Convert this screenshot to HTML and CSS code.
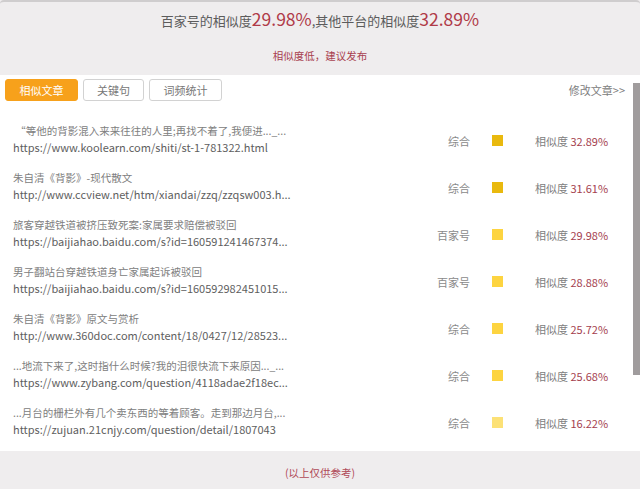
FILE: index.html
```html
<!DOCTYPE html>
<html lang="zh-CN">
<head>
    <meta charset="UTF-8">
    <meta name="viewport" content="width=device-width, initial-scale=1.0">
    <title>相似度检测</title>
    <link rel="stylesheet" href="styles.css">
</head>
<body>
    <div class="report">
        <div class="summary">
            <h1>百家号的相似度<span class="pct">29.98%</span>,其他平台的相似度<span class="pct">32.89%</span></h1>
            <p class="advice">相似度低，建议发布</p>
        </div>

        <div class="panel">
            <div class="toolbar">
                <div class="tabs">
                    <button class="tab active">相似文章</button>
                    <button class="tab">关键句</button>
                    <button class="tab">词频统计</button>
                </div>
                <a class="edit-link" href="#">修改文章&gt;&gt;</a>
            </div>

            <ul class="results">
                <li class="row">
                    <div class="info">
                        <p class="title">&nbsp;“等他的背影混入来来往往的人里;再找不着了,我便进..._...</p>
                        <p class="url">https://www.koolearn.com/shiti/st-1-781322.html</p>
                    </div>
                    <span class="cat">综合</span>
                    <span class="mark level-high"></span>
                    <span class="sim">相似度 <em>32.89%</em></span>
                </li>
                <li class="row">
                    <div class="info">
                        <p class="title">朱自清《背影》-现代散文</p>
                        <p class="url">http://www.ccview.net/htm/xiandai/zzq/zzqsw003.h...</p>
                    </div>
                    <span class="cat">综合</span>
                    <span class="mark level-high"></span>
                    <span class="sim">相似度 <em>31.61%</em></span>
                </li>
                <li class="row">
                    <div class="info">
                        <p class="title">旅客穿越铁道被挤压致死案:家属要求赔偿被驳回</p>
                        <p class="url">https://baijiahao.baidu.com/s?id=160591241467374...</p>
                    </div>
                    <span class="cat">百家号</span>
                    <span class="mark level-mid"></span>
                    <span class="sim">相似度 <em>29.98%</em></span>
                </li>
                <li class="row">
                    <div class="info">
                        <p class="title">男子翻站台穿越铁道身亡家属起诉被驳回</p>
                        <p class="url">https://baijiahao.baidu.com/s?id=160592982451015...</p>
                    </div>
                    <span class="cat">百家号</span>
                    <span class="mark level-mid"></span>
                    <span class="sim">相似度 <em>28.88%</em></span>
                </li>
                <li class="row">
                    <div class="info">
                        <p class="title">朱自清《背影》原文与赏析</p>
                        <p class="url">http://www.360doc.com/content/18/0427/12/28523...</p>
                    </div>
                    <span class="cat">综合</span>
                    <span class="mark level-mid"></span>
                    <span class="sim">相似度 <em>25.72%</em></span>
                </li>
                <li class="row">
                    <div class="info">
                        <p class="title">...地流下来了,这时指什么时候?我的泪很快流下来原因..._...</p>
                        <p class="url">https://www.zybang.com/question/4118adae2f18ec...</p>
                    </div>
                    <span class="cat">综合</span>
                    <span class="mark level-mid"></span>
                    <span class="sim">相似度 <em>25.68%</em></span>
                </li>
                <li class="row">
                    <div class="info">
                        <p class="title">...月台的栅栏外有几个卖东西的等着顾客。走到那边月台,...</p>
                        <p class="url">https://zujuan.21cnjy.com/question/detail/1807043</p>
                    </div>
                    <span class="cat">综合</span>
                    <span class="mark level-low"></span>
                    <span class="sim">相似度 <em>16.22%</em></span>
                </li>
            </ul>
            <div class="scrollbar"></div>
        </div>

        <p class="footnote">(以上仅供参考)</p>
    </div>
</body>
</html>
```

FILE: styles.css
```css
body {
    margin: 0;
    font-family: "Noto Sans CJK SC", "Noto Sans", sans-serif;
    background-color: #efedee;
    color: #666;
}

.report {
    height: 489px;
    border-top: 2px solid #cfcdce;
    border-radius: 4px 4px 0 0;
    box-sizing: border-box;
}

.summary {
    text-align: center;
    padding-top: 5px;
    height: 73px;
    box-sizing: border-box;
}

h1 {
    margin: 0;
    font-size: 13px;
    font-weight: normal;
    line-height: 24px;
    color: #5c5c5c;
}

h1 .pct {
    font-size: 17.5px;
    color: #b03a48;
}

.advice {
    margin: 15px 0 0;
    font-size: 10.5px;
    line-height: 16px;
    color: #a8404f;
}

.panel {
    position: relative;
    background-color: #ffffff;
    padding: 4px 0 7px;
}

.toolbar {
    display: flex;
    justify-content: space-between;
    padding: 0 15px 0 5px;
}

.tabs {
    display: flex;
    gap: 5px;
}

.tab {
    height: 22px;
    padding: 0;
    font-family: inherit;
    font-size: 11px;
    color: #777;
    background-color: #ffffff;
    border: 1px solid #d2d2d2;
    border-radius: 3px;
    white-space: nowrap;
}

.tab:nth-child(1) {
    width: 73px;
}

.tab:nth-child(2) {
    width: 61px;
}

.tab:nth-child(3) {
    width: 73px;
}

.tab.active {
    background-color: #f7a11b;
    border-color: #f7a11b;
    color: #ffffff;
}

.edit-link {
    font-size: 11px;
    line-height: 16px;
    padding-top: 3px;
    color: #808080;
    text-decoration: none;
}

.results {
    list-style: none;
    margin: 14px 0 0;
    padding: 0;
}

.row {
    display: flex;
    align-items: center;
    height: 47px;
    padding: 7px 34px 6px 13px;
    box-sizing: border-box;
    font-size: 11px;
}

.info {
    flex: 1;
    min-width: 0;
}

.info p {
    margin: 0;
    line-height: 17px;
    white-space: nowrap;
}

.title {
    font-size: 10.5px;
    color: #808080;
}

.url {
    color: #5e5e5e;
}

.cat {
    width: 60px;
    text-align: right;
    color: #8a8a8a;
    padding-top: 3px;
}

.mark {
    width: 11px;
    height: 11px;
    margin: 3px 32px 0 22px;
}

.level-high {
    background-color: #e9b90e;
}

.level-mid {
    background-color: #fdd440;
}

.level-low {
    background-color: #fce176;
}

.sim {
    width: 71px;
    color: #808080;
    padding-top: 3px;
    white-space: nowrap;
}

.sim em {
    font-style: normal;
    color: #a43e4e;
}

.scrollbar {
    position: absolute;
    top: 8px;
    right: 0;
    width: 7px;
    height: 292px;
    background-color: #a09c9d;
}

.footnote {
    margin: 0;
    text-align: center;
    font-size: 10.5px;
    line-height: 16px;
    padding-top: 14px;
    color: #b04a58;
}
```
